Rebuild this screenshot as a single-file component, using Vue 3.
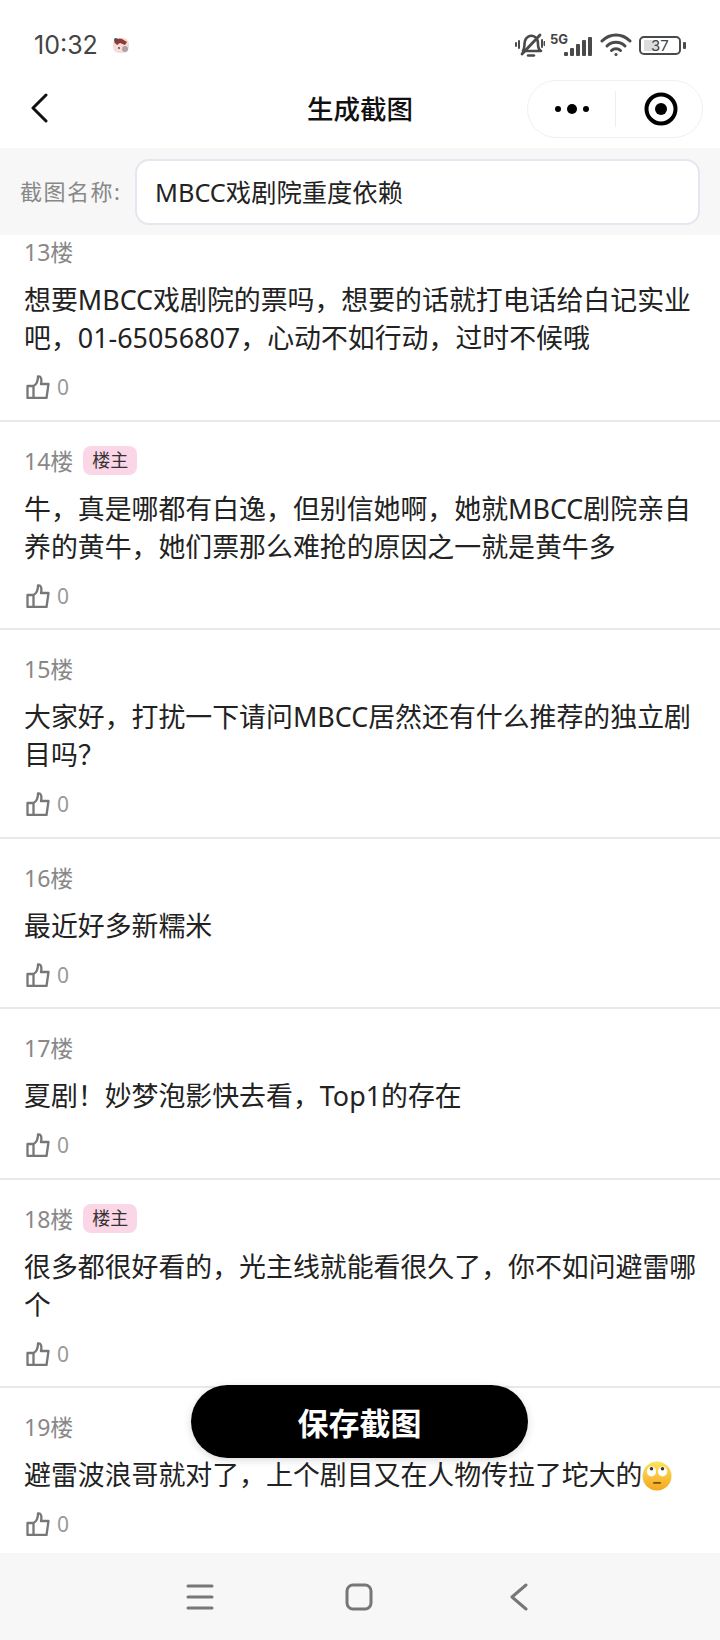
<template>
  <div class="page">
    <!-- status bar -->
    <div class="status">
      <span class="time">10:32</span>
      <svg class="sticker" viewBox="0 0 18 18" width="18" height="18">
        <rect x="1" y="2" width="16" height="15" rx="6" fill="#f6dcd6" />
        <path d="M2 6 Q6 1 10 3 L15 6 L13 9 L8 7 L5 9 Z" fill="#8e3a36" />
        <circle cx="4" cy="4" r="2" fill="#5d4a48" />
        <circle cx="13" cy="13" r="3" fill="#a9a3a6" />
        <circle cx="7" cy="12" r="1" fill="#8e3a36" />
      </svg>
      <div class="status-right">
        <svg class="ic-bell" viewBox="0 0 30 26" width="30" height="26" fill="none" stroke="#4a4a4a">
          <path d="M8 19 C10 16 9 12 10 9 C11 5 15 3 18 4 C22 5 23 9 23 12 C23 15 24 18 26 19 L8 19 Z" stroke-width="2.6" stroke-linejoin="round" />
          <path d="M7 22 L25 3" stroke-width="2.8" stroke-linecap="round" />
          <path d="M13 23.5 H19" stroke-width="2.4" stroke-linecap="round" />
          <path d="M4 9 V16 M1 11 V14 M27 8 V15 M29.5 10 V13" stroke-width="2" stroke-linecap="round" />
        </svg>
        <span class="five-g">5G</span>
        <div class="signal">
          <i style="height:4px"></i><i style="height:8px"></i><i style="height:12px"></i><i style="height:16px"></i><i style="height:19px"></i>
        </div>
        <svg class="ic-wifi" viewBox="0 0 32 24" width="32" height="24" fill="none" stroke="#4a4a4a" stroke-width="3" stroke-linecap="round">
          <path d="M2 8 C10 0 22 0 30 8" />
          <path d="M7 13 C12 8 20 8 25 13" />
          <path d="M11.5 17.5 C14 15 18 15 20.5 17.5" />
          <circle cx="16" cy="21.5" r="1.6" fill="#4a4a4a" stroke="none" />
        </svg>
        <div class="battery">
          <div class="battery-box"><span class="battery-fill"></span><span class="battery-num">37</span></div>
          <span class="battery-nub"></span>
        </div>
      </div>
    </div>

    <!-- nav bar -->
    <div class="nav">
      <svg class="back" viewBox="0 0 18 30" width="18" height="30" fill="none" stroke="#111" stroke-width="3" stroke-linecap="round" stroke-linejoin="round">
        <path d="M16 2 L3 15 L16 28" />
      </svg>
      <span class="nav-title">生成截图</span>
      <div class="capsule">
        <div class="dots"><i></i><i class="big"></i><i></i></div>
        <span class="capsule-line"></span>
        <svg viewBox="0 0 34 34" width="34" height="34">
          <circle cx="17" cy="17" r="14.5" fill="none" stroke="#000" stroke-width="4" />
          <circle cx="17" cy="17" r="6" fill="#000" />
        </svg>
      </div>
    </div>

    <!-- name input -->
    <div class="name-bar">
      <span class="name-label">截图名称:</span>
      <div class="name-input">MBCC戏剧院重度依赖</div>
    </div>

    <!-- reply list -->
    <div class="list">
      <div v-for="item in replies" :key="item.floor" class="reply">
        <div class="reply-head">
          <span class="floor">{{ item.floor }}楼</span>
          <span v-if="item.owner" class="tag">楼主</span>
        </div>
        <div class="reply-text">{{ item.text }}<svg v-if="item.emoji" class="emoji" viewBox="0 0 30 30" width="30" height="30">
            <defs>
              <linearGradient id="face" x1="0" y1="0" x2="0" y2="1">
                <stop offset="0" stop-color="#fce45e" />
                <stop offset="1" stop-color="#f4a71e" />
              </linearGradient>
            </defs>
            <circle cx="15" cy="15" r="14.5" fill="url(#face)" />
            <ellipse cx="9.5" cy="10.5" rx="4.6" ry="5" fill="#fff" />
            <ellipse cx="20.5" cy="10.5" rx="4.6" ry="5" fill="#fff" />
            <circle cx="9.5" cy="7.8" r="1.8" fill="#4a3320" />
            <circle cx="20.5" cy="7.8" r="1.8" fill="#4a3320" />
            <rect x="11" y="21" width="8" height="1.8" rx="0.9" fill="#7a4a1c" />
          </svg></div>
        <div class="like">
          <svg viewBox="0 0 24 24" width="24" height="24" fill="none" stroke="#777" stroke-width="2.3" stroke-linejoin="round">
            <path d="M7.5 11 H1.5 V23 H7.5 M7.5 23 V11 C10.5 9.5 12 6 12 1.5 C15 1 16 4 15 9 H22.5 L20.5 23 Z" />
          </svg>
          <span class="like-num">0</span>
        </div>
      </div>
      <button class="save">保存截图</button>
    </div>

    <!-- android nav -->
    <div class="sys-nav">
      <svg viewBox="0 0 28 28" width="28" height="28" stroke="#777" stroke-width="3" stroke-linecap="round">
        <path d="M2 3 H26 M2 14 H26 M2 25 H26" />
      </svg>
      <svg viewBox="0 0 28 28" width="28" height="28" fill="none" stroke="#777" stroke-width="3">
        <rect x="2" y="2" width="24" height="24" rx="6" />
      </svg>
      <svg class="sys-back" viewBox="0 0 20 28" width="20" height="28" fill="none" stroke="#777" stroke-width="3" stroke-linecap="round" stroke-linejoin="round">
        <path d="M17 2 L3 14 L17 26" />
      </svg>
    </div>
  </div>
</template>

<script setup>
const replies = [
  { floor: 13, text: '想要MBCC戏剧院的票吗，想要的话就打电话给白记实业吧，01-65056807，心动不如行动，过时不候哦' },
  { floor: 14, owner: true, text: '牛，真是哪都有白逸，但别信她啊，她就MBCC剧院亲自养的黄牛，她们票那么难抢的原因之一就是黄牛多' },
  { floor: 15, text: '大家好，打扰一下请问MBCC居然还有什么推荐的独立剧目吗？' },
  { floor: 16, text: '最近好多新糯米' },
  { floor: 17, text: '夏剧！妙梦泡影快去看，Top1的存在' },
  { floor: 18, owner: true, text: '很多都很好看的，光主线就能看很久了，你不如问避雷哪个' },
  { floor: 19, emoji: true, text: '避雷波浪哥就对了，上个剧目又在人物传拉了坨大的' }
]
</script>

<style>
body { background: #fff; }
</style>

<style scoped>
.page {
  width: 720px;
  height: 1640px;
  display: flex;
  flex-direction: column;
  overflow: hidden;
  background: #fff;
  font-family: "Noto Sans", "Noto Sans CJK SC", sans-serif;
  color: #222;
}

/* status bar */
.status {
  height: 65px;
  flex-shrink: 0;
  display: flex;
  align-items: center;
  padding: 25px 34px 0 34px;
  box-sizing: border-box;
}
.time { font-family: Inter, sans-serif; font-size: 25px; color: #444; }
.sticker { margin-left: 14px; }
.status-right { margin-left: auto; display: flex; align-items: center; }
.five-g { font-family: Inter, sans-serif; font-size: 13px; font-weight: 700; color: #444; margin: -13px -4px 0 5px; }
.signal { display: flex; align-items: flex-end; gap: 2px; height: 19px; margin-top: 3px; }
.signal i { width: 4px; background: #4a4a4a; border-radius: 1px; }
.ic-wifi { margin-left: 8px; }
.battery { display: flex; align-items: center; margin-left: 7px; }
.battery-box {
  position: relative;
  width: 42px;
  height: 19px;
  box-sizing: border-box;
  border: 2px solid #4a4a4a;
  border-radius: 5px;
  display: flex;
  align-items: center;
  justify-content: center;
}
.battery-fill { position: absolute; left: 3px; top: 2px; bottom: 2px; width: 14px; background: #ddd; }
.battery-num { position: relative; font-family: Inter, sans-serif; font-size: 15px; color: #444; line-height: 1; }
.battery-nub { width: 3px; height: 7px; margin-left: 2px; background: #4a4a4a; border-radius: 1px; }

/* nav */
.nav {
  height: 83px;
  flex-shrink: 0;
  display: flex;
  align-items: center;
  justify-content: space-between;
  position: relative;
  padding: 0 17px 0 30px;
}
.back { margin-top: 3px; }
.nav-title {
  position: absolute;
  left: 0;
  right: 0;
  top: 26px;
  text-align: center;
  font-size: 26.5px;
  line-height: 36px;
  font-weight: 500;
  color: #111;
}
.capsule {
  width: 176px;
  height: 58px;
  margin-top: 4px;
  box-sizing: border-box;
  border: 1px solid #f0f0f0;
  border-radius: 29px;
  display: flex;
  align-items: center;
  padding-left: 27px;
}
.dots { display: flex; align-items: center; gap: 6px; width: 36px; }
.dots i { width: 6px; height: 6px; border-radius: 50%; background: #000; }
.dots i.big { width: 10px; height: 10px; }
.capsule-line { width: 1px; height: 36px; background: #eee; margin: 0 28px 0 24px; }

/* name input */
.name-bar {
  height: 87px;
  flex-shrink: 0;
  position: relative;
  z-index: 1;
  box-sizing: border-box;
  background: #f7f7f7;
  display: flex;
  align-items: flex-start;
  padding: 11px 20px 0;
}
.name-label { font-size: 22px; line-height: 65px; color: #888; width: 115px; letter-spacing: 1.5px; flex-shrink: 0; }
.name-input {
  width: 566px;
  height: 66px;
  box-sizing: border-box;
  background: #fff;
  border: 2px solid #e6e6f2;
  border-radius: 14px;
  padding-left: 18px;
  font-size: 25.3px;
  line-height: 62px;
  color: #222;
}

/* list */
.list {
  flex: 1;
  min-height: 0;
  position: relative;
  margin-top: -22px;
  overflow: hidden;
}
.reply {
  padding: 21px 20px 20.5px 24px;
  border-bottom: 2px solid #e8e8ee;
}
.reply-head { display: flex; align-items: center; height: 34px; gap: 10px; }
.floor { font-size: 23px; color: #888; }
.tag {
  font-size: 18px;
  line-height: 29px;
  margin-top: 1px;
  padding: 0 9px;
  border-radius: 8px;
  background: #fbd6e6;
  color: #333;
}
.reply-text {
  margin-top: 13px;
  font-size: 26.9px;
  line-height: 38px;
  color: #222;
}
.emoji { vertical-align: -6px; }
.like { display: flex; align-items: center; height: 24px; margin-top: 18px; padding-left: 2px; gap: 7px; }
.like-num { font-size: 21px; color: #999; }
.save {
  position: absolute;
  left: 191px;
  bottom: 95px;
  width: 337px;
  height: 73px;
  border: none;
  border-radius: 37px;
  background: #000;
  color: #fff;
  font-family: inherit;
  font-size: 31px;
  font-weight: 700;
  box-shadow: 0 2px 8px rgba(0, 0, 0, .15);
}

/* android nav */
.sys-nav {
  height: 87px;
  flex-shrink: 0;
  background: #f7f7f7;
  display: flex;
  align-items: center;
  padding-left: 186px;
  gap: 131px;
  box-sizing: border-box;
}
.sys-back { margin-left: 5px; }
</style>
